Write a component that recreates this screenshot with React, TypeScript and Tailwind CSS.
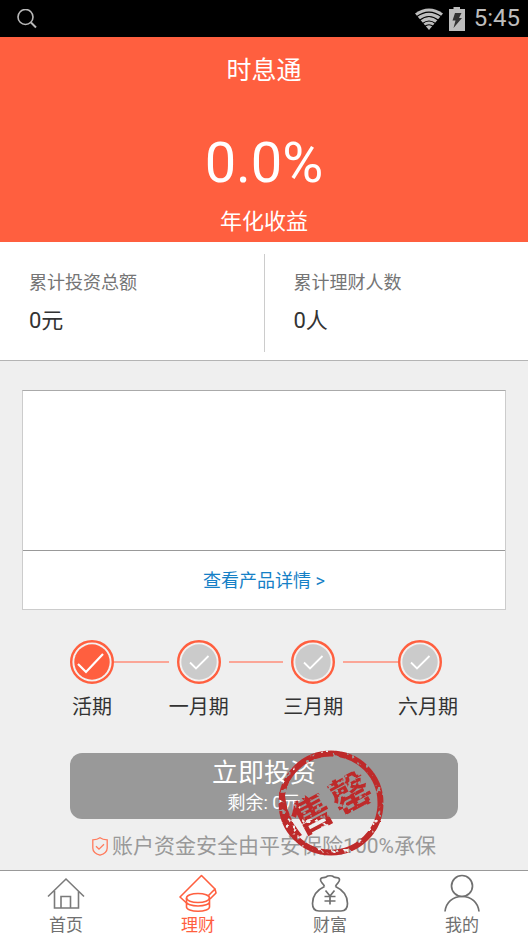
import React from "react";

function SearchIcon() {
  return (
    <svg width="20" height="20" viewBox="0 0 20 20" fill="none" stroke="#b9b9b9" strokeWidth="1.6" aria-hidden="true">
      <circle cx="8.5" cy="8" r="7.5" />
      <path d="M14 13.500l5 5" strokeWidth="2" />
    </svg>
  );
}

function WifiIcon() {
  return (
    <svg width="28" height="22" viewBox="0 0 28 22" aria-hidden="true">
      <path d="M0 5.5Q14-4.5 28 5.5L14 22Z" fill="#bdbdbd" />
      <g fill="none" stroke="#000" strokeWidth="1.2">
        <path d="M1.5 8.8Q14-.5 26.500 8.800" />
        <path d="M4.500 12.200Q14 4.800 23.500 12.200" />
        <path d="M7.500 15.500Q14 10.500 20.500 15.500" />
        <path d="M9.500 18.500Q14 15 18.500 18.500" />
      </g>
    </svg>
  );
}

function BatteryIcon() {
  return (
    <svg width="16" height="24" viewBox="0 0 16 24" aria-hidden="true">
      <path d="M4.500 0h6.500v2H16v22H0V2h4.500z" fill="#bdbdbd" />
      <path d="M6 6h6.500l-2.500 5h3L4.500 21l2-7.500H3.500z" fill="#333" />
    </svg>
  );
}

function StepCircle({ active }: { active?: boolean }) {
  return (
    <svg width="44" height="44" viewBox="0 0 44 44" fill="none" className="shrink-0" aria-hidden="true">
      <circle cx="22" cy="22" r="20.800" stroke="#ff5f3f" strokeWidth="2.400" fill="#f4f1f0" />
      <circle cx="22" cy="22" r="17.700" fill={active ? "#ff5f3f" : "#cbcbcb"} />
      {active ? (
        <path d="M8 24l8 8 17-18" stroke="#fff" strokeWidth="2.200" />
      ) : (
        <path d="M13 22.500l6 6L31.500 16" stroke="#fff" strokeWidth="1.800" />
      )}
    </svg>
  );
}

function ShieldIcon() {
  return (
    <svg width="16" height="19" viewBox="0 0 16 19" fill="none" stroke="#ff7a5c" strokeWidth="1.300" className="shrink-0" aria-hidden="true">
      <path d="M8 .8C6 2.300 3.500 2.800.8 2.800V11c0 3.800 3.200 6 7.200 7.200 4-1.200 7.200-3.400 7.200-7.200V2.800C12.500 2.800 10 2.300 8 .8z" />
      <path d="M4 9.200l3 3 5-5" />
    </svg>
  );
}

function SoldOutStamp() {
  return (
    <svg width="108" height="108" viewBox="0 0 108 108" className="pointer-events-none absolute -top-[4px] left-[207px]" role="img" aria-label="售罄">
      <defs>
        <filter id="worn" x="-5%" y="-5%" width="110%" height="110%">
          <feTurbulence type="fractalNoise" baseFrequency="0.2" numOctaves="2" seed="4" result="n" />
          <feDisplacementMap in="SourceGraphic" in2="n" scale="1.5" xChannelSelector="R" yChannelSelector="B" result="d" />
          <feColorMatrix in="n" type="matrix" values="0 0 0 0 0  0 0 0 0 0  0 0 0 0 0  0 -10 0 0 7" result="m" />
          <feComposite in="d" in2="m" operator="in" />
        </filter>
      </defs>
      <g filter="url(#worn)">
        <circle cx="54" cy="54" r="49.500" fill="none" stroke="#be2b2c" strokeWidth="6" />
        <path d="M2 43C2 63 8 78 18 90l7-4C15 74 10 62 8 47z" fill="#be2b2c" />
        <g
          transform="rotate(-28 54 54)"
          fill="#be2b2c"
          textAnchor="middle"
          className="font-['Noto_Sans_CJK_SC',sans-serif] text-[40px] font-bold"
        >
          <text x="32" y="69">售</text>
          <text x="76" y="69">罄</text>
        </g>
      </g>
    </svg>
  );
}

function HomeIcon() {
  return (
    <svg width="38" height="38" viewBox="0 0 38 38" fill="none" stroke="#7a7a7a" strokeWidth="1.600" aria-hidden="true">
      <path d="M1 22.500L19 5l18 17.500M7.500 17v17h24V17M14 34V22.500h9.500V34" />
    </svg>
  );
}

function FinanceIcon() {
  return (
    <svg width="38" height="38" viewBox="0 0 38 38" fill="none" stroke="#ff5f3f" strokeWidth="1.600" strokeLinejoin="round" aria-hidden="true">
      <path d="M7.500 29L1 23 22.500 1.500 36 15l-6.500 6.500M31 25l6-6-1-4" />
      <ellipse cx="19" cy="24" rx="11.500" ry="4.500" />
      <path d="M7.500 24v9c0 2.300 5 4.200 11.500 4.200s11.500-1.900 11.500-4.200v-9M7.500 28c0 2.200 5 4 11.500 4s11.500-1.800 11.500-4" />
    </svg>
  );
}

function WealthIcon() {
  return (
    <svg width="38" height="38" viewBox="0 0 38 38" fill="none" stroke="#707070" strokeWidth="1.700" strokeLinejoin="round" aria-hidden="true">
      <path d="M13.500 12.500C12.500 9 9 8.500 9.500 5.500 10 2.500 13 4.500 15 3c2-1.700 6-1.700 8 0 2 1.500 5-.5 5.500 2.500.5 3-3 3.500-4 7M13.500 12.500C6 16 1.500 22 1.500 29.500c0 5 2.500 7.500 6.500 7.500h22c4 0 6.500-2.500 6.500-7.500 0-7.500-4.500-13.500-12-17" />
      <path d="M14.500 16.500l4.500 5.500 4.500-5.500M19 22v8.500M13.500 22.500h11M13.500 27h11" />
    </svg>
  );
}

function ProfileIcon() {
  return (
    <svg width="38" height="38" viewBox="0 0 38 38" fill="none" stroke="#707070" strokeWidth="1.700" aria-hidden="true">
      <circle cx="19" cy="12" r="10.500" />
      <path d="M2 37.500C3 28.500 9.500 22.500 19 22.500s16 6 17 15" />
    </svg>
  );
}

const stats = [
  { label: "累计投资总额", value: "0元" },
  { label: "累计理财人数", value: "0人" },
];

const terms = ["活期", "一月期", "三月期", "六月期"];

const tabs = [
  { label: "首页", icon: <HomeIcon /> },
  { label: "理财", icon: <FinanceIcon />, active: true },
  { label: "财富", icon: <WealthIcon /> },
  { label: "我的", icon: <ProfileIcon /> },
];

export default function App() {
  return (
    <div className="flex min-h-screen flex-col bg-[#efefef] font-[Roboto,'Noto_Sans_CJK_SC',sans-serif] text-[#333]">
      <div className="flex h-[37px] items-center bg-black pl-[17px] pr-2 text-[#bdbdbd]">
        <SearchIcon />
        <div className="ml-auto flex items-center">
          <WifiIcon />
          <span className="ml-[6px]">
            <BatteryIcon />
          </span>
          <span className="ml-[9px] text-[24px] leading-[37px]">5:45</span>
        </div>
      </div>

      <header className="flex h-[205px] flex-col items-center bg-[#ff5f3f] text-white">
        <h1 className="pt-[18px] text-[25px] leading-[32px]">时息通</h1>
        <p className="mt-[43px] text-[56px] leading-[66px]">0.0%</p>
        <p className="mt-3 text-[22px] leading-[28px]">年化收益</p>
      </header>

      <section className="flex border-b border-[#b4b4b4] bg-white pb-2 pt-3">
        {stats.map((s, i) => (
          <dl
            key={s.label}
            className={i === 0 ? "h-[98px] flex-1 border-r border-[#ccc] pl-[29px]" : "h-[98px] flex-1 pl-[29px]"}
          >
            <dt className="pt-4 text-[18px] leading-[26px] text-[#757575]">{s.label}</dt>
            <dd className="mt-[11px] text-[22px] leading-[28px]">{s.value}</dd>
          </dl>
        ))}
      </section>

      <main className="flex flex-col">
        <section className="mx-[22px] mt-[29px] border border-[#ccc] border-t-[#aaa] bg-white">
          <div className="h-[159px]" />
          <a
            href="#details"
            className="block border-t border-[#999] pt-[2px] text-center text-[18px] leading-[56px] text-[#1580c6]"
          >
            查看产品详情 &gt;
          </a>
        </section>

        <div className="mx-[70px] mt-[30px] flex" role="group" aria-label="期限">
          {terms.map((term, i) => (
            <React.Fragment key={term}>
              {i > 0 && <span className="mt-[21px] h-[2px] flex-1 bg-[#fba697]" />}
              <button
                type="button"
                className={
                  i === 0
                    ? "flex w-11 flex-col items-center"
                    : i === 3
                      ? "flex w-[60px] flex-col items-start"
                      : "flex w-[60px] flex-col items-center"
                }
              >
                <StepCircle active={i === 0} />
                <span className="mt-[9px] whitespace-nowrap text-[20px] leading-[28px]">{term}</span>
              </button>
            </React.Fragment>
          ))}
        </div>

        <div className="relative mx-[70px] mt-8">
          <button
            type="button"
            className="flex h-[66px] w-full flex-col items-center rounded-xl bg-[#999] pt-[3px] text-white"
          >
            <span className="text-[26px] leading-[34px]">立即投资</span>
            <span className="text-[18px] leading-[26px]">剩余: 0元</span>
          </button>
          <p className="mt-[13px] flex items-center justify-center gap-1 whitespace-nowrap text-[21px] leading-[28px] text-[#999]">
            <ShieldIcon />
            账户资金安全由平安保险100%承保
          </p>
          <SoldOutStamp />
        </div>
      </main>

      <nav className="mt-auto flex h-[70px] border-t border-[#999] bg-white">
        {tabs.map((t) => (
          <a
            key={t.label}
            href="#tab"
            className={
              t.active
                ? "flex flex-1 flex-col items-center pt-[3px] text-[17px] leading-[26px] text-[#ff5f3f]"
                : "flex flex-1 flex-col items-center pt-[3px] text-[17px] leading-[26px] text-[#707070]"
            }
          >
            {t.icon}
            {t.label}
          </a>
        ))}
      </nav>
    </div>
  );
}
